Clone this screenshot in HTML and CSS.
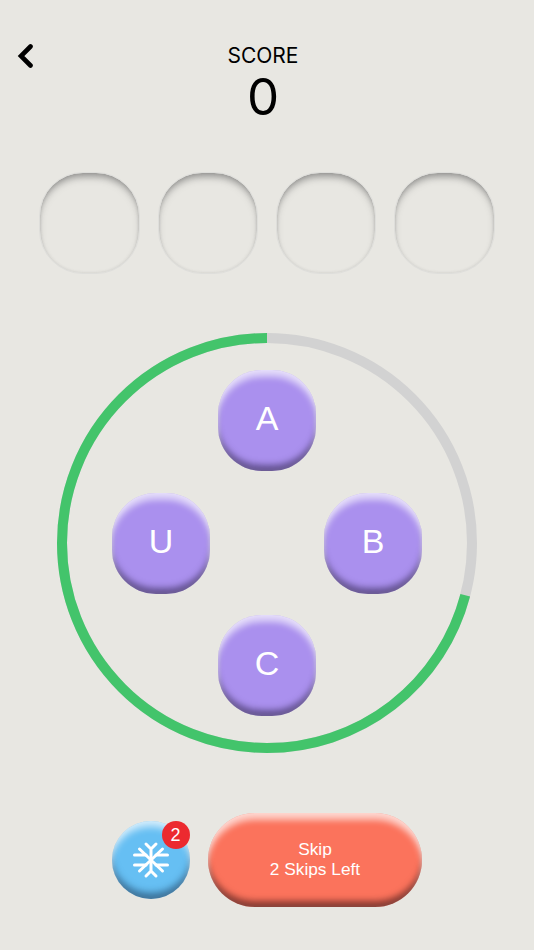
FILE: index.html
```
<!DOCTYPE html>
<html lang="en">
<head>
<meta charset="utf-8">
<title>Score</title>
<link rel="stylesheet" href="styles.css">
</head>
<body>
<main class="screen">
  <header class="header">
    <a class="back" aria-label="Back">
      <svg width="16" height="24" viewBox="0 0 16 24"><path d="M13.5 2.5 L4 12 L13.5 21.5" fill="none" stroke="#000" stroke-width="4.6" stroke-linecap="round" stroke-linejoin="miter"/></svg>
    </a>
    <div class="score">
      <div class="score-label">SCORE</div>
      <div class="score-value">0</div>
    </div>
  </header>
  <section class="slots">
    <div class="slot"></div>
    <div class="slot slot-narrow"></div>
    <div class="slot slot-narrow"></div>
    <div class="slot"></div>
  </section>
  <section class="wheel">
    <svg class="ring" width="420" height="420" viewBox="0 0 420 420">
      <circle cx="210" cy="210" r="205" fill="none" stroke="#d2d2d2" stroke-width="10"/>
      <circle cx="210" cy="210" r="205" fill="none" stroke="#43c46b" stroke-width="10" pathLength="100" stroke-dasharray="70.9 100" transform="rotate(-90 210 210) scale(1 -1) translate(0 -420)"/>
    </svg>
    <div class="letters">
      <button class="letter pos-a">A</button>
      <button class="letter pos-u">U</button>
      <button class="letter pos-b">B</button>
      <button class="letter pos-c">C</button>
    </div>
  </section>
  <footer class="actions">
    <button class="freeze" aria-label="Freeze">
      <svg width="38" height="38" viewBox="-19 -19 38 38" fill="none" stroke="#fff" stroke-width="3" stroke-linecap="round" stroke-linejoin="round">
        <path d="M0 -11 V11 M-5 -16 L0 -11 L5 -16 M-5 16 L0 11 L5 16"/>
        <path d="M-11.5 -11 L11.5 11 M11.5 -11 L-11.5 11"/>
        <path d="M-16.5 -5 H-5 M-16.5 5 H-5 M16.5 -5 H5 M16.5 5 H5"/>
      </svg>
      <span class="badge">2</span>
    </button>
    <button class="skip"><span class="skip-text">Skip<br>2 Skips Left</span></button>
  </footer>
</main>
</body>
</html>
```
FILE: styles.css
```
* { box-sizing: border-box; }
html, body { margin: 0; padding: 0; }
body { background: #e8e7e2; font-family: "Liberation Sans", Arial, sans-serif; }
.screen { width: 534px; height: 950px; overflow: hidden; display: flex; flex-direction: column; }

.header { position: relative; height: 172px; display: flex; justify-content: center; padding-right: 8px; }
.back { position: absolute; left: 17px; top: 44px; display: block; line-height: 0; }
.score { padding-top: 42px; text-align: center; color: #000; font-family: Inter, sans-serif; }
.score-label { font-size: 21px; line-height: 28px; font-weight: 400; }
.score-value { font-size: 51px; line-height: 58px; font-weight: 400; margin-top: -2px; }

.slots { display: flex; gap: 18px; padding-left: 39px; height: 102px; }
.slot { width: 101px; height: 102px; border-radius: 44px; border: 1px solid #dededb;
  box-shadow: inset 0 6px 7px -2px rgba(90,90,90,.55), inset 0 0 3px rgba(120,120,120,.25); }
.slot-narrow { width: 100px; }

.wheel { position: relative; width: 420px; height: 420px; margin: 59px 0 0 57px; }
.ring { position: absolute; left: 0; top: 0; display: block; }
.letters { position: absolute; left: 55px; top: 37px; display: grid; grid-template-columns: repeat(3, 98px); grid-template-rows: repeat(3, 101px); column-gap: 8px; row-gap: 21.5px; }
.letter { border: 0; padding: 0 0 5px; border-radius: 44px; background: #aa90ee; color: #fff; font: 34px/1 "Liberation Sans", Arial, sans-serif;
  box-shadow: inset 0 8px 6px -1px rgba(255,255,255,.62), inset 0 -8px 6px -2px rgba(40,30,70,.55), inset 0 0 4px rgba(255,255,255,.45); }
.pos-a { grid-area: 1 / 2; }
.pos-u { grid-area: 2 / 1; }
.pos-b { grid-area: 2 / 3; }
.pos-c { grid-area: 3 / 2; }

.actions { display: flex; align-items: center; gap: 18px; margin: 60px 0 0 112px; height: 94px; }
.freeze { position: relative; width: 78px; height: 78px; border: 0; padding: 0; border-radius: 50%; background: #66bff3; display: flex; align-items: center; justify-content: center; margin-top: -1px;
  box-shadow: inset 0 8px 7px -2px rgba(255,255,255,.65), inset 0 -8px 7px -2px rgba(20,50,80,.55), inset 0 0 4px rgba(255,255,255,.3); }
.badge { position: absolute; left: 49.5px; top: 0; width: 28px; height: 28px; border-radius: 50%; background: #ec2a2f; color: #fff; font: 18px/28px "Liberation Sans", Arial, sans-serif; text-align: center; }
.skip { width: 214px; height: 94px; border: 0; padding: 0 0 2px; border-radius: 47px; background: #fb735c; color: #fff; font: 17.3px/20px "Liberation Sans", Arial, sans-serif;
  box-shadow: inset 0 8px 6px -1px rgba(255,255,255,.65), inset 0 -8px 6px -2px rgba(60,20,20,.6), inset 0 0 4px rgba(255,255,255,.35); }
.skip-text { display: block; }
```
